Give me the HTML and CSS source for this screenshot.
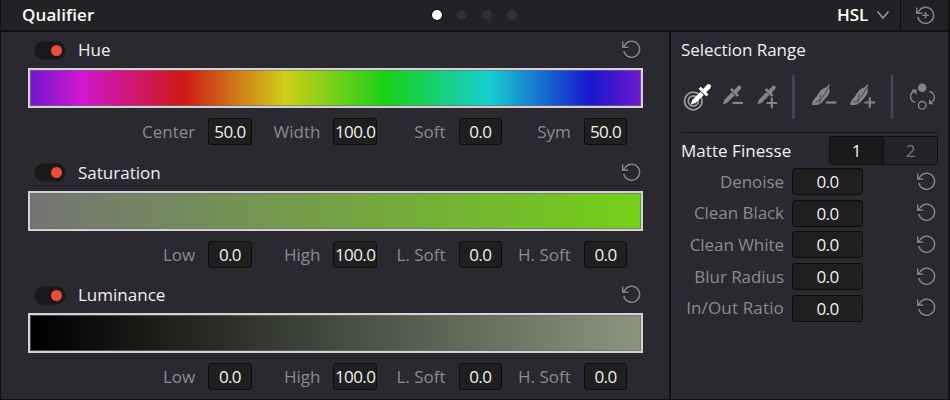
FILE: index.html
```html
<!DOCTYPE html>
<html lang="en">
<head>
<meta charset="utf-8">
<title>Qualifier</title>
<link rel="stylesheet" href="styles.css">
</head>
<body>
<svg class="defs" aria-hidden="true">
  <symbol id="reset" viewBox="0 0 22 22"><path d="M5.5 6.2A8 8 0 1 1 3.8 13M2.7 3.6v5.6h5.5M3.4 8.7l3-3.1"/></symbol>
  <symbol id="dropper" viewBox="0 0 24 24"><path class="fill" d="M1 23l1.8-5.2 8.6-8.6 3.5 3.5-8.6 8.6z"/><path class="fill" d="M9.4 6.2l2.2-2.2 2.7 2.3 3.8-4.1q2.3-1.9 3.9-.3t-.3 3.900l-4.100 3.800 2.300 2.700-2.200 2.200z"/></symbol>
  <symbol id="feather" viewBox="0 0 22 24"><path class="fill" d="M.5 22C0 19.500 2 16.500 5 13.500C8 10 8.500 5.500 16 3.300L18.300.5l.9.400-.9 3C19.500 7 19 10 17 12.500C14.500 15.500 13 17 11.500 19C9 21.500 4.500 23 .5 22z"/><path class="vein" d="M4 19.500C9.500 17.500 14.500 11 17 5"/><path class="vein" d="M10 11l-1 3.500M8 20l2-3.800"/></symbol>
</svg>
<div class="panel">
  <header class="header">
    <h1 class="title">Qualifier</h1>
    <div class="dots"><i class="dot on"></i><i class="dot"></i><i class="dot"></i><i class="dot"></i></div>
    <div class="mode">HSL<svg class="chevron" viewBox="0 0 14 10"><path d="M1.500 1.500L7 8l5.500-6.500"/></svg></div>
    <div class="reset-all"><svg class="icon" viewBox="0 0 22 22"><path d="M5.500 6.200A8 8 0 1 1 3.800 13M2.700 3.600v5.600h5.500M3.400 8.700l3-3.100M11.500 8v6.500M8.200 11.200h6.600"/></svg></div>
  </header>
  <main class="body">
    <section class="channels">
      <div class="channel">
        <div class="channel-head"><span class="toggle"></span><span class="name">Hue</span><svg class="icon"><use href="#reset"/></svg></div>
        <div class="bar hue"></div>
        <div class="fields"><label>Center</label><b class="value">50.0</b><label>Width</label><b class="value">100.0</b><label>Soft</label><b class="value">0.0</b><label>Sym</label><b class="value">50.0</b></div>
      </div>
      <div class="channel">
        <div class="channel-head"><span class="toggle"></span><span class="name">Saturation</span><svg class="icon"><use href="#reset"/></svg></div>
        <div class="bar saturation"></div>
        <div class="fields"><label>Low</label><b class="value">0.0</b><label>High</label><b class="value">100.0</b><label>L. Soft</label><b class="value">0.0</b><label>H. Soft</label><b class="value">0.0</b></div>
      </div>
      <div class="channel">
        <div class="channel-head"><span class="toggle"></span><span class="name">Luminance</span><svg class="icon"><use href="#reset"/></svg></div>
        <div class="bar luminance"></div>
        <div class="fields"><label>Low</label><b class="value">0.0</b><label>High</label><b class="value">100.0</b><label>L. Soft</label><b class="value">0.0</b><label>H. Soft</label><b class="value">0.0</b></div>
      </div>
    </section>
    <aside class="side">
      <h2 class="heading range">Selection Range</h2>
      <svg class="tools" viewBox="0 0 257 45">
        <g class="target"><circle cx="12.300" cy="26" r="8.800"/><circle cx="12.300" cy="26" r="5"/></g>
        <use class="active" href="#dropper" x="8.800" y="8" width="22.500" height="22.500"/>
        <use href="#dropper" x="41" y="9.500" width="20.500" height="20.500"/>
        <path class="sign" d="M51.500 28h10.500"/>
        <use href="#dropper" x="75.500" y="9.500" width="20.500" height="20.500"/>
        <path class="sign" d="M85.500 28h10.500M90.800 22.800v10.500"/>
        <path class="split" d="M112.500 1v42M211 1v42"/>
        <use href="#feather" x="130.500" y="8.700" width="21" height="23"/>
        <path class="sign" d="M145 27.500h10.500"/>
        <use href="#feather" x="168.800" y="8.700" width="21" height="23"/>
        <path class="sign" d="M183.500 27.500h10.500M188.800 22.200v10.600"/>
        <circle class="fill" cx="241.200" cy="12.800" r="4.300"/>
        <circle class="ring" cx="241.200" cy="30.300" r="3.800"/>
        <path class="ring" d="M234 27.300C228.500 26 228 18.500 232.800 16.500M248.400 16.500C254.500 18 254.800 25 250 27.300"/>
        <path class="fill" d="M230.300 14.500h5.200v5.200zM247.800 29.200h4.800l-4.600-5.200z"/>
      </svg>
      <div class="matte-head"><h2 class="heading">Matte Finesse</h2><div class="tabs"><span class="tab on">1</span><span class="tab">2</span></div></div>
      <div class="rows">
        <div class="row"><label>Denoise</label><b class="value wide">0.0</b><svg class="icon"><use href="#reset"/></svg></div>
        <div class="row"><label>Clean Black</label><b class="value wide">0.0</b><svg class="icon"><use href="#reset"/></svg></div>
        <div class="row"><label>Clean White</label><b class="value wide">0.0</b><svg class="icon"><use href="#reset"/></svg></div>
        <div class="row"><label>Blur Radius</label><b class="value wide">0.0</b><svg class="icon"><use href="#reset"/></svg></div>
        <div class="row"><label class="long">In/Out Ratio</label><b class="value wide">0.0</b><svg class="icon"><use href="#reset"/></svg></div>
      </div>
    </aside>
  </main>
</div>
</body>
</html>
```
FILE: styles.css
```css
* { box-sizing: border-box; }
body { margin: 0; background: #111114; }
.defs { display: block; width: 0; height: 0; position: absolute; }
.panel {
  width: 950px; height: 400px;
  display: flex; flex-direction: column;
  border: solid #111114; border-width: 0 2px 1px 1px;
  background: #2a292f;
  font: 17px/24px "Open Sans", "Noto Sans", sans-serif;
  color: #f0f0f0;
}
h1, h2 { margin: 0; font-size: inherit; font-weight: 400; }
.header {
  height: 32px; flex: none;
  display: grid; grid-template-columns: 414px 1fr 75px 47px;
  align-items: center;
  background: #222226; border-bottom: 2px solid #111114;
}
.title { padding-left: 21px; font-weight: 600; font-size: 17px; letter-spacing: .1px; color: #f8f8f8; }
.dots { display: flex; gap: 15px; padding-left: 17px; }
.dot { width: 10px; height: 10px; border-radius: 50%; background: #303035; }
.dot.on { background: #fff; box-shadow: 0 0 0 1px #08080a; }
.mode { display: flex; align-items: center; gap: 8px; font-weight: 600; color: #fff; padding-left: 11px; }
.chevron { width: 14px; height: 10px; fill: none; stroke: #939396; stroke-width: 1.7; }
.reset-all { height: 30px; margin-left: -1px; border-left: 1px solid #0c0c0e; display: flex; align-items: center; padding-left: 13px; }
.icon { width: 22px; height: 22px; fill: none; stroke: #838386; stroke-width: 1.5; filter: drop-shadow(0 1px 0 #1b1b1f); }
.body { flex: 1; display: grid; grid-template-columns: 668px 1fr; }
.channels { padding: 6px 26px 0 27px; }
.channel { height: 122.5px; }
.channel-head { height: 24px; display: flex; align-items: center; padding: 0 0 0 6px; }
.channel-head .icon { margin: -2px 1px 0 auto; }
.toggle { width: 32px; height: 19px; border-radius: 10px; background: #191919; border: 1px solid #202022; padding: 3px; display: flex; justify-content: flex-end; }
.toggle::after { content: ""; width: 11px; height: 11px; border-radius: 50%; background: #ea4c3d; }
.name { margin-left: 12px; }
.bar { height: 40px; margin-top: 6px; border: 2px solid #d4d1d7; box-shadow: inset 0 0 0 1px rgba(110,105,115,.65); }
.hue { background: linear-gradient(90deg, #7017d0 0, #d017d0 8.3%, #d01717 25%, #d0d017 41.7%, #17d017 58.3%, #17d0d0 75%, #1717d0 91.7%, #7017d0 100%); }
.saturation { background: linear-gradient(90deg, #747474, #74d017); }
.luminance { background: linear-gradient(90deg, #000 1%, #8b967f); }
.fields { margin-top: 10px; height: 27px; display: grid; grid-template-columns: repeat(4, 81.7px 43.5px); margin-left: 98.5px; }
label { text-align: right; padding: 2px 13px 0 0; color: #8b8b8e; }
.value {
  height: 27px; border: 1.5px solid #0d0d0e; border-radius: 3px; background: #1f1f1f;
  font-weight: 400; letter-spacing: -.6px; text-align: center; line-height: 25px;
  display: flex; justify-content: center; white-space: nowrap;
}
.side { border-left: 2px solid #111114; padding: 6px 0 0 10px; }
.heading { font-size: 17px; letter-spacing: .05px; }
.range { letter-spacing: -.05px; }
.tools { display: block; width: 257px; height: 45px; margin-top: 13px; stroke: none; fill: none; color: #858585; }
.fill { fill: currentColor; stroke: none; }
.vein { stroke: #2a292f; stroke-width: .8; }
.sign { stroke: #858585; stroke-width: 2.2; }
.split { stroke: #464a50; stroke-width: 2.5; stroke-linecap: round; }
.ring { stroke: #858585; stroke-width: 1.4; }
.target { stroke: #9a9a9c; stroke-width: 1.8; }
.active { color: #fff; }
.matte-head { width: 257px; margin-top: 12px; padding-top: 3px; border-top: 1px solid #151518; display: flex; justify-content: space-between; align-items: center; }
.tabs { display: grid; grid-template-columns: 54px 53px; width: 109px; height: 29px; border: 1px solid #0e0e10; border-radius: 3px; overflow: hidden; line-height: 27px; text-align: center; }
.tab { color: #77777a; background: #242428; }
.tab.on { color: #f0f0f0; background: #191a1c; border-right: 1px solid #0d0d0e; }
.rows { margin-top: 1px; }
.row { height: 31.6px; display: grid; grid-template-columns: 111px 71px 1fr; align-items: center; }
.row label { padding: 0 8px 0 0; letter-spacing: -.05px; }
.row .long { letter-spacing: .15px; }
.row .icon { justify-self: end; margin: 0 11px 2px 0; }
```
